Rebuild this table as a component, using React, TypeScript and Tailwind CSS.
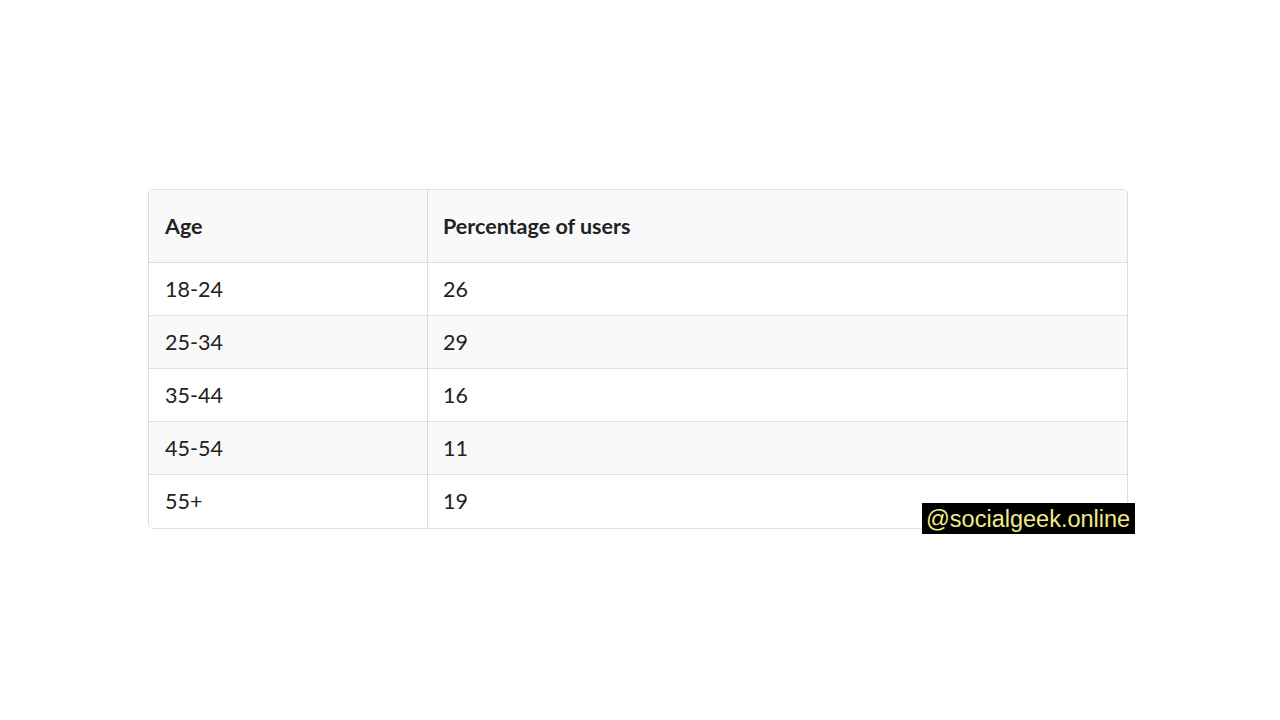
import React from "react";

const rows: [string, string][] = [
  ["18-24", "26"],
  ["25-34", "29"],
  ["35-44", "16"],
  ["45-54", "11"],
  ["55+", "19"],
];

export default function App() {
  return (
    <div className="relative w-[1280px] h-[720px] bg-white overflow-hidden" style={{ fontFamily: "Lato, 'Noto Sans', sans-serif" }}>
      <div className="pt-[189px] pl-[148px]">
        <div className="w-[980px] border border-[#dddddd] rounded-[5px] overflow-hidden text-[#222222] text-[21.5px]">
          <div className="flex h-[72px] bg-[#f9f9f9] font-bold">
            <div className="w-[279px] border-r border-[#dddddd] flex items-center pl-[16px]">Age</div>
            <div className="flex-1 flex items-center pl-[15px]">Percentage of users</div>
          </div>
          {rows.map(([a, p], i) => (
            <div key={a} className={`flex h-[53px] border-t border-[#dddddd] ${i % 2 === 1 ? "bg-[#f9f9f9]" : "bg-white"} ${i === 4 ? "h-[54px]" : ""}`}>
              <div className="w-[279px] border-r border-[#dddddd] flex items-center pl-[16px]">{a}</div>
              <div className="flex-1 flex items-center pl-[15px]">{p}</div>
            </div>
          ))}
        </div>
      </div>
      <div
        className="absolute left-[922px] top-[503px] w-[213px] h-[31px] bg-black text-[#f2ea8a] text-[23.5px] leading-[33px] pl-[4px]"
        style={{ fontFamily: "'Liberation Sans', Arial, sans-serif" }}
      >
        @socialgeek.online
      </div>
    </div>
  );
}
